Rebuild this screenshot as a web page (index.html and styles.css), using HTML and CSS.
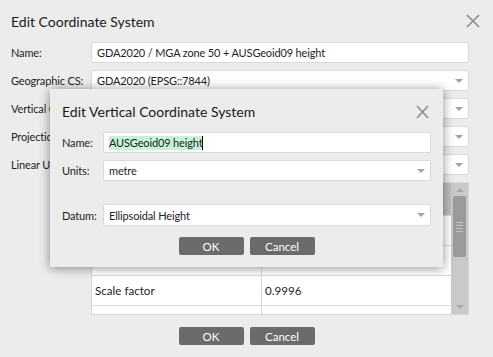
FILE: index.html
```html
<!DOCTYPE html>
<html>
<head>
<meta charset="utf-8">
<link rel="stylesheet" href="styles.css">
</head>
<body>
<div class="dialog">
  <div class="titlebar">
    <span class="title">Edit Coordinate System</span>
    <svg class="close main-close" width="14" height="14" viewBox="0 0 14 14"><path d="M1 1L13 13M13 1L1 13" stroke="#8c8c8c" stroke-width="1.6" fill="none"/></svg>
  </div>
  <div class="form main-form">
    <span class="label">Name:</span>
    <div class="field"><span>GDA2020 / MGA zone 50 + AUSGeoid09 height</span></div>
    <span class="label">Geographic CS:</span>
    <div class="field"><span>GDA2020 (EPSG::7844)</span><span class="arrow"></span></div>
    <span class="label">Vertical CS:</span>
    <div class="field"><span>AUSGeoid09 height</span><span class="arrow"></span></div>
    <span class="label">Projection:</span>
    <div class="field"><span>Transverse Mercator</span><span class="arrow"></span></div>
    <span class="label">Linear Units:</span>
    <div class="field"><span>metre</span><span class="arrow"></span></div>
  </div>
  <div class="table">
    <div class="grid">
      <div class="th">Parameter</div><div class="th">Value</div>
      <div class="td">Latitude of natural origin</div><div class="td">0</div>
      <div class="td">Longitude of natural origin</div><div class="td">117</div>
      <div class="td">Scale factor</div><div class="td">0.9996</div>
      <div class="td"></div><div class="td"></div>
    </div>
    <div class="scrollbar">
      <span class="sb-up"></span>
      <div class="thumb"><i></i><i></i><i></i><i></i></div>
      <span class="sb-down"></span>
    </div>
  </div>
  <div class="buttons">
    <button class="btn">OK</button>
    <button class="btn">Cancel</button>
  </div>
</div>

<div class="modal">
  <div class="titlebar modal-titlebar">
    <span class="title">Edit Vertical Coordinate System</span>
    <svg class="close modal-close" width="13" height="14" viewBox="0 0 13 14"><path d="M1 1L12 13M12 1L1 13" stroke="#8c8c8c" stroke-width="1.6" fill="none"/></svg>
  </div>
  <div class="form modal-form">
    <span class="label">Name:</span>
    <div class="field"><span class="sel">AUSGeoid09 height</span><span class="caret"></span></div>
    <span class="label">Units:</span>
    <div class="field"><span>metre</span><span class="arrow"></span></div>
    <span class="spacer"></span><span class="spacer"></span>
    <span class="label">Datum:</span>
    <div class="field tall"><span>Ellipsoidal Height</span><span class="arrow"></span></div>
  </div>
  <div class="buttons modal-buttons">
    <button class="btn">OK</button>
    <button class="btn">Cancel</button>
  </div>
</div>
</body>
</html>
```
FILE: styles.css
```css
html, body {
  margin: 0;
  padding: 0;
}
body {
  width: 493px;
  height: 357px;
  overflow: hidden;
  background: #ececec;
  font-family: Lato, "Open Sans", sans-serif;
  font-size: 11px;
  letter-spacing: -0.15px;
  color: #1d1d2b;
  position: relative;
}
.dialog {
  display: flex;
  flex-direction: column;
}
.titlebar {
  display: flex;
  align-items: center;
  justify-content: space-between;
  height: 42px;
  padding: 0 13px 0 11px;
}
.title {
  font-size: 14px;
  letter-spacing: 0;
  color: #1a1a1a;
}
.main-form {
  padding: 0 24px 0 11px;
  grid-template-columns: 80px 1fr;
}
.form {
  display: grid;
  row-gap: 7px;
  align-items: center;
}
.label {
  white-space: nowrap;
  overflow: hidden;
}
.field {
  height: 21px;
  box-sizing: border-box;
  border: 1px solid #d9d9d9;
  border-radius: 2px;
  background: #fff;
  padding-left: 5px;
  display: flex;
  align-items: center;
  white-space: nowrap;
  overflow: hidden;
}
.field.tall {
  height: 22px;
}
.arrow {
  margin-left: auto;
  margin-right: 5px;
  width: 0;
  height: 0;
  border-left: 4px solid transparent;
  border-right: 4px solid transparent;
  border-top: 4px solid #a3a3a3;
}
.table {
  margin: 7px 24px 0 91px;
  height: 133px;
  box-sizing: border-box;
  border: 1px solid #d6d6d6;
  background: #fff;
  display: flex;
  overflow: hidden;
  font-size: 11.6px;
  letter-spacing: 0;
}
.grid {
  flex: 1;
  display: grid;
  grid-template-columns: 169px 1fr;
  grid-template-rows: 32px repeat(4, 30px);
}
.th {
  background: #bdbdbd;
  padding-left: 4px;
  display: flex;
  align-items: center;
}
.td {
  border-top: 1px solid #d9d9d9;
  padding-left: 3px;
  display: flex;
  align-items: center;
  white-space: nowrap;
  overflow: hidden;
}
.grid > :nth-child(2n) {
  border-left: 1px solid #d9d9d9;
}
.scrollbar {
  width: 17px;
  background: #c9c9c9;
  display: flex;
  flex-direction: column;
  align-items: center;
}
.sb-up, .sb-down {
  width: 0;
  height: 0;
  border-left: 4px solid transparent;
  border-right: 4px solid transparent;
}
.sb-up {
  margin-top: 5px;
  border-bottom: 4px solid #a8a8a8;
}
.sb-down {
  margin-top: auto;
  margin-bottom: 5px;
  border-top: 4px solid #a8a8a8;
}
.thumb {
  margin-top: 4px;
  width: 13px;
  height: 61px;
  border-radius: 2px;
  background: #9b9b9b;
  display: flex;
  flex-direction: column;
  align-items: center;
  justify-content: center;
  gap: 2px;
}
.thumb i {
  display: block;
  width: 7px;
  height: 1px;
  background: #c4c4c4;
}
.buttons {
  display: flex;
  justify-content: center;
  gap: 6px;
  margin-top: 12px;
}
.btn {
  width: 65px;
  height: 18px;
  padding: 0;
  border: none;
  border-radius: 2px;
  background: #6b6b6b;
  color: #fff;
  font-family: inherit;
  font-size: 11.5px;
}
.modal {
  position: absolute;
  left: 50px;
  top: 89px;
  width: 393px;
  height: 178px;
  box-sizing: border-box;
  background: #ececec;
  box-shadow: 0 1px 10px rgba(0, 0, 0, 0.45);
  display: flex;
  flex-direction: column;
}
.modal-titlebar {
  height: 41px;
  padding: 2px 14px 0 12px;
}
.modal-form {
  padding: 0 12px;
  grid-template-columns: 41px 1fr;
}
.spacer {
  height: 9px;
}
.sel {
  background: #c8f2d3;
  line-height: 14px;
}
.caret {
  width: 1px;
  height: 14px;
  background: #000;
}
.modal-buttons {
  margin-top: 11px;
}
```
